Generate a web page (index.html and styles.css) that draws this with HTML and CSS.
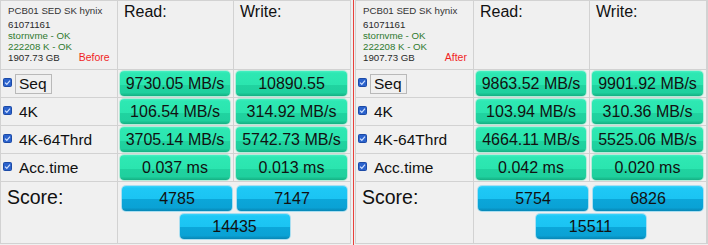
FILE: index.html
```html
<!DOCTYPE html>
<html lang="en">
<head>
<meta charset="utf-8">
<title>AS SSD Benchmark — Before / After</title>
<link rel="stylesheet" href="styles.css">
</head>
<body>
<div class="screen">
  <section class="panel panel-left">
    <div class="cell info">
      <div class="model">PCB01 SED SK hynix</div>
      <div>61071161</div>
      <div class="ok">stornvme - OK</div>
      <div class="ok">222208 K - OK</div>
      <div class="size-row"><span>1907.73 GB</span><span class="tag tag-before">Before</span></div>
    </div>
    <div class="cell head">Read:</div>
    <div class="cell head">Write:</div>

    <div class="cell label"><svg class="check" viewBox="0 0 9 9"><rect x="0.5" y="0.5" width="8" height="8" rx="1" fill="#2b62cc" stroke="#1c4aa6"/><path d="M2 4.6 L3.8 6.3 L7 2.6" fill="none" stroke="#cfe0ff" stroke-width="1.2"/></svg><span class="name focus">Seq</span></div>
    <div class="cell val"><div class="pill green">9730.05 MB/s</div></div>
    <div class="cell val"><div class="pill green">10890.55</div></div>

    <div class="cell label"><svg class="check" viewBox="0 0 9 9"><rect x="0.5" y="0.5" width="8" height="8" rx="1" fill="#2b62cc" stroke="#1c4aa6"/><path d="M2 4.6 L3.8 6.3 L7 2.6" fill="none" stroke="#cfe0ff" stroke-width="1.2"/></svg><span class="name">4K</span></div>
    <div class="cell val"><div class="pill green">106.54 MB/s</div></div>
    <div class="cell val"><div class="pill green">314.92 MB/s</div></div>

    <div class="cell label"><svg class="check" viewBox="0 0 9 9"><rect x="0.5" y="0.5" width="8" height="8" rx="1" fill="#2b62cc" stroke="#1c4aa6"/><path d="M2 4.6 L3.8 6.3 L7 2.6" fill="none" stroke="#cfe0ff" stroke-width="1.2"/></svg><span class="name">4K-64Thrd</span></div>
    <div class="cell val"><div class="pill green">3705.14 MB/s</div></div>
    <div class="cell val"><div class="pill green">5742.73 MB/s</div></div>

    <div class="cell label"><svg class="check" viewBox="0 0 9 9"><rect x="0.5" y="0.5" width="8" height="8" rx="1" fill="#2b62cc" stroke="#1c4aa6"/><path d="M2 4.6 L3.8 6.3 L7 2.6" fill="none" stroke="#cfe0ff" stroke-width="1.2"/></svg><span class="name">Acc.time</span></div>
    <div class="cell val"><div class="pill green">0.037 ms</div></div>
    <div class="cell val"><div class="pill green">0.013 ms</div></div>

    <div class="cell score-label">Score:</div>
    <div class="cell scores">
      <div class="pill blue">4785</div>
      <div class="pill blue">7147</div>
      <div class="pill blue total">14435</div>
    </div>
  </section>

  <div class="divider"></div>

  <section class="panel panel-right">
    <div class="cell info">
      <div class="model">PCB01 SED SK hynix</div>
      <div>61071161</div>
      <div class="ok">stornvme - OK</div>
      <div class="ok">222208 K - OK</div>
      <div class="size-row"><span>1907.73 GB</span><span class="tag tag-after">After</span></div>
    </div>
    <div class="cell head">Read:</div>
    <div class="cell head">Write:</div>

    <div class="cell label"><svg class="check" viewBox="0 0 9 9"><rect x="0.5" y="0.5" width="8" height="8" rx="1" fill="#2b62cc" stroke="#1c4aa6"/><path d="M2 4.6 L3.8 6.3 L7 2.6" fill="none" stroke="#cfe0ff" stroke-width="1.2"/></svg><span class="name focus">Seq</span></div>
    <div class="cell val"><div class="pill green">9863.52 MB/s</div></div>
    <div class="cell val"><div class="pill green">9901.92 MB/s</div></div>

    <div class="cell label"><svg class="check" viewBox="0 0 9 9"><rect x="0.5" y="0.5" width="8" height="8" rx="1" fill="#2b62cc" stroke="#1c4aa6"/><path d="M2 4.6 L3.8 6.3 L7 2.6" fill="none" stroke="#cfe0ff" stroke-width="1.2"/></svg><span class="name">4K</span></div>
    <div class="cell val"><div class="pill green">103.94 MB/s</div></div>
    <div class="cell val"><div class="pill green">310.36 MB/s</div></div>

    <div class="cell label"><svg class="check" viewBox="0 0 9 9"><rect x="0.5" y="0.5" width="8" height="8" rx="1" fill="#2b62cc" stroke="#1c4aa6"/><path d="M2 4.6 L3.8 6.3 L7 2.6" fill="none" stroke="#cfe0ff" stroke-width="1.2"/></svg><span class="name">4K-64Thrd</span></div>
    <div class="cell val"><div class="pill green">4664.11 MB/s</div></div>
    <div class="cell val"><div class="pill green">5525.06 MB/s</div></div>

    <div class="cell label"><svg class="check" viewBox="0 0 9 9"><rect x="0.5" y="0.5" width="8" height="8" rx="1" fill="#2b62cc" stroke="#1c4aa6"/><path d="M2 4.6 L3.8 6.3 L7 2.6" fill="none" stroke="#cfe0ff" stroke-width="1.2"/></svg><span class="name">Acc.time</span></div>
    <div class="cell val"><div class="pill green">0.042 ms</div></div>
    <div class="cell val"><div class="pill green">0.020 ms</div></div>

    <div class="cell score-label">Score:</div>
    <div class="cell scores">
      <div class="pill blue">5754</div>
      <div class="pill blue">6826</div>
      <div class="pill blue total">15511</div>
    </div>
  </section>
</div>
</body>
</html>
```

FILE: styles.css
```css
* { box-sizing: border-box; }

html, body {
  margin: 0;
  padding: 0;
  background: #f0f0f0;
}

body {
  font-family: "Liberation Sans", Arial, sans-serif;
  color: #111;
}

.screen {
  display: flex;
  width: 708px;
  height: 245px;
  overflow: hidden;
}

/* one benchmark result window: a table with thin grey rules */
.panel {
  display: grid;
  grid-template-rows: 68px 27px 27px 27px 27px 61px;
  gap: 1px;
  background: #d2d2d2;
  border: 1px solid #d2d2d2;
  height: 244px;
}

.panel-left  { grid-template-columns: 116px 115px 116px; width: 351px; }
.panel-right { grid-template-columns: 117px 115px 116px; width: 353px; }

.divider {
  width: 1px;
  margin: 0 1px 0 2px;
  background: #e8403a;
}

.cell {
  background: #f0f0f0;
  min-width: 0;
}

/* drive details in the top-left corner */
.info {
  padding: 4px 0 0 7px;
  font-size: 9.7px;
  line-height: 11px;
  color: #2a2a2a;
}

.info .model {
  color: #333;
  margin-bottom: 3px;
}

.info .ok { color: #2f7a2f; }

.size-row { display: flex; align-items: baseline; }

.tag {
  color: #f01f1f;
  font-size: 10.5px;
}

.tag-before { margin-left: 19px; }
.tag-after  { margin-left: 30px; }

.head {
  padding: 2px 0 0 6px;
  font-size: 16px;
  line-height: 18px;
  color: #111;
}

/* test names with their checkboxes */
.label {
  display: flex;
  align-items: center;
  padding-left: 2px;
  font-size: 15.5px;
}

.check {
  width: 9px;
  height: 9px;
  flex: none;
  margin-right: 3px;
  margin-top: -2px;
}

.name {
  border: 1px solid transparent;
  padding: 0 4px 0 3px;
  line-height: 18px;
}

.name.focus { border-color: #b9b9b9; }

/* result values */
.val {
  display: flex;
  padding: 1px 3px 0 2px;
}

.pill {
  flex: 1;
  height: 25px;
  border-radius: 4px;
  display: flex;
  align-items: center;
  justify-content: center;
  font-size: 16px;
  color: #111;
  padding-top: 1px;
}

.green {
  background: linear-gradient(#46f0c3 0, #2ee8b3 2px, #2be5af 55%, #20d3a0 58%, #1fd09e 86%, #15b083 100%);
  box-shadow: 0 0 0 1px rgba(70, 230, 175, 0.35);
}

.blue {
  background: linear-gradient(#3cd4fb 0, #1ec8f6 2px, #1bc4f3 50%, #0ba6d9 53%, #0aa2d5 86%, #0787b6 100%);
  box-shadow: 0 0 0 1px rgba(40, 190, 240, 0.35);
}

.score-label {
  padding: 4px 0 0 6px;
  font-size: 19.5px;
  line-height: 22px;
}

.scores {
  grid-column: 2 / 4;
  display: grid;
  grid-template-columns: 110px 110px;
  grid-auto-rows: 25px;
  column-gap: 5px;
  row-gap: 3px;
  padding: 4px 0 0 4px;
}

.scores .total {
  grid-column: 1 / 3;
  justify-self: center;
  width: 110px;
}
```
